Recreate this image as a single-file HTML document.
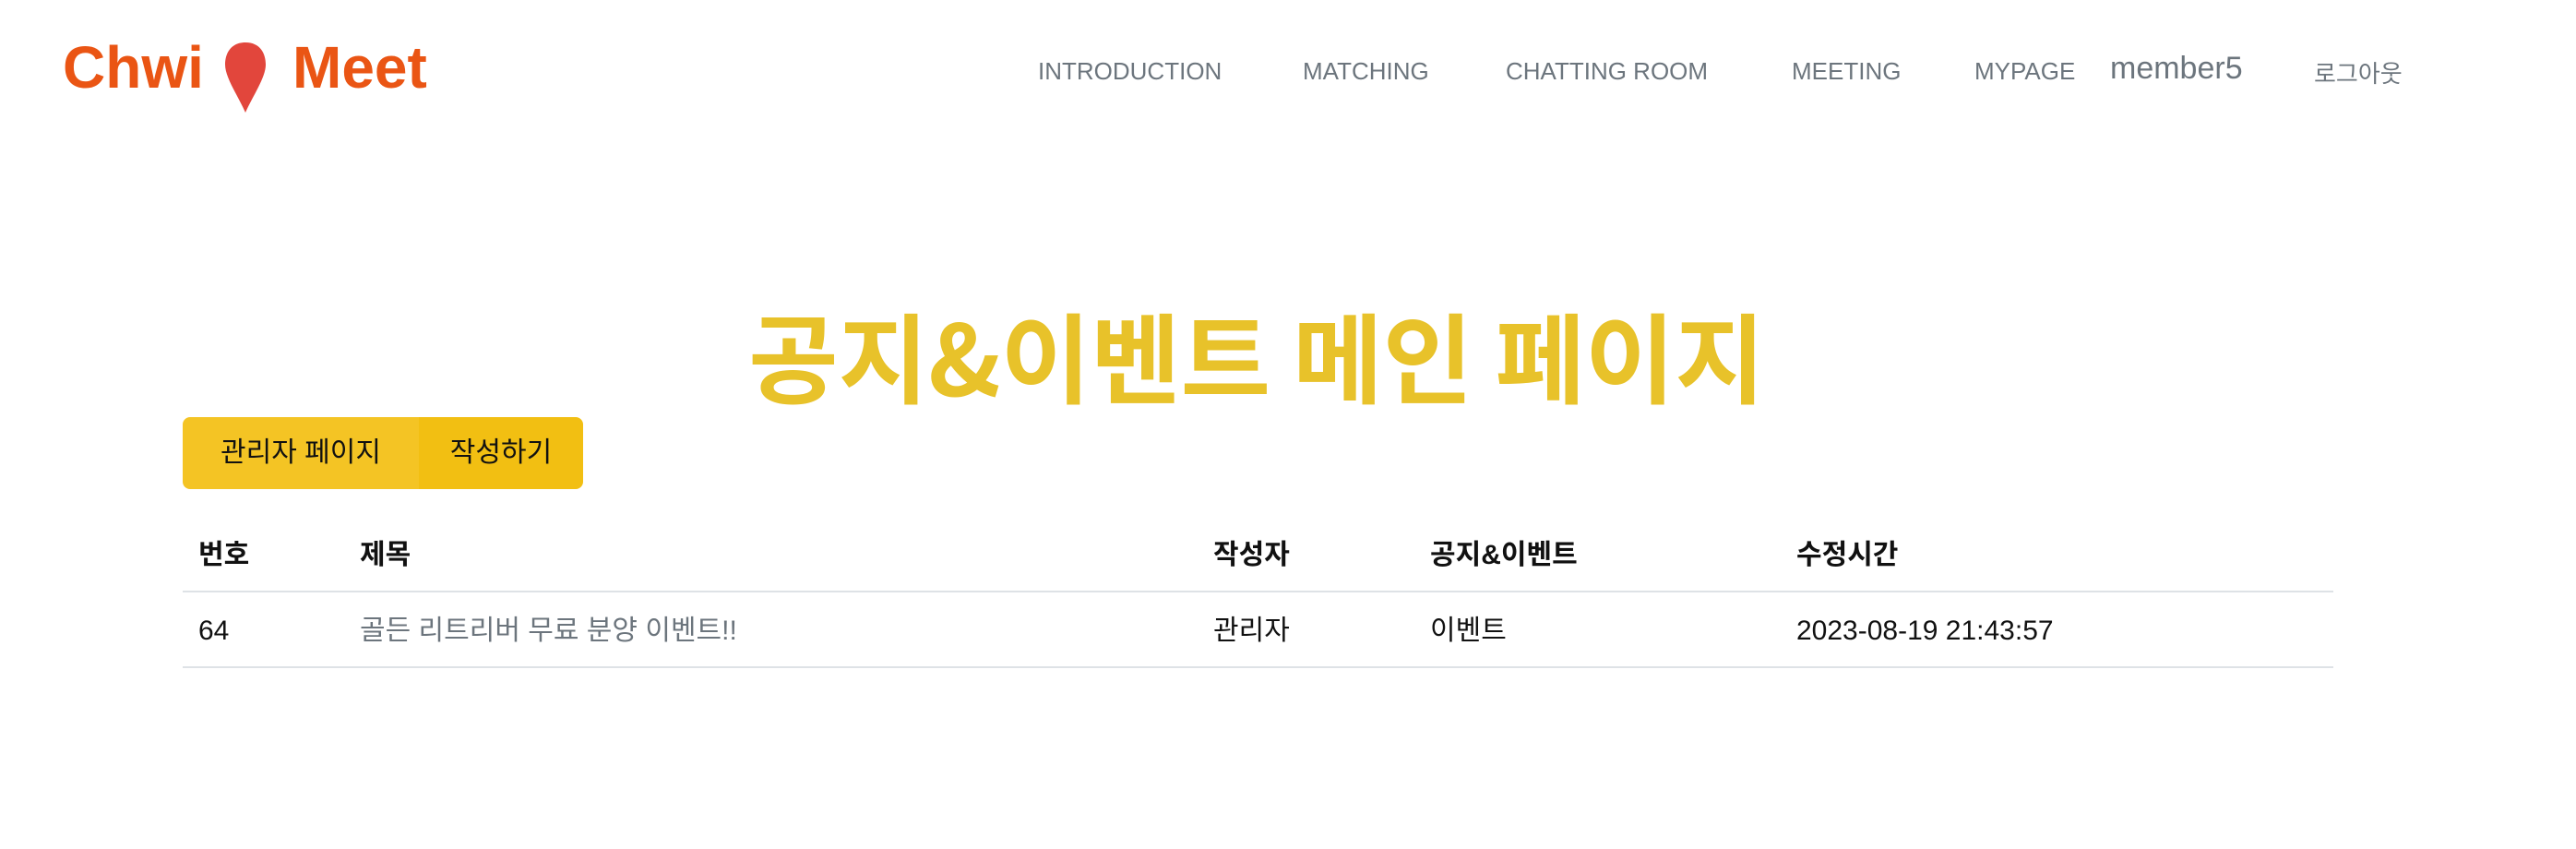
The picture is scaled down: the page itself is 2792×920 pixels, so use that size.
<!DOCTYPE html>
<html><head><meta charset="utf-8"><style>
body{margin:0;width:2792px;height:920px;background:#fff;font-family:"Liberation Sans","Noto Sans CJK KR",sans-serif;position:relative;overflow:hidden}
.a{position:absolute;white-space:nowrap}
.logo{font-weight:bold;font-size:64px;color:#ea5514;top:36px}
.nav{font-size:26px;color:#6c757d;top:62px}
.title{font-family:"Noto Sans CJK KR",sans-serif;font-weight:bold;font-size:106px;line-height:130px;color:#e8c22a;top:318px;left:0;width:2724px;text-align:center}
.btn{top:452px;height:78px;line-height:78px;font-size:30px;color:#111;text-align:center}
.th{font-size:30px;font-weight:bold;color:#111;top:584px;line-height:36px}
.td{font-size:30px;color:#111;top:666px;line-height:36px}
.line{position:absolute;left:198px;width:2331px;height:2px;background:#dee2e6}
</style></head><body>
<div class="a logo" style="left:68px">Chwi</div>
<svg class="a" style="left:236px;top:44px" width="60" height="80" viewBox="0 0 60 80"><path d="M30 2C14 2 8 14 8 26 8 40 22 60 30 78 38 60 52 40 52 26 52 14 46 2 30 2Z" fill="#e2463c"/></svg>
<div class="a logo" style="left:317px">Meet</div>
<div class="a nav" style="left:1125px">INTRODUCTION</div>
<div class="a nav" style="left:1412px">MATCHING</div>
<div class="a nav" style="left:1632px">CHATTING ROOM</div>
<div class="a nav" style="left:1942px">MEETING</div>
<div class="a nav" style="left:2140px">MYPAGE</div>
<div class="a nav" style="left:2287px;top:55px;font-size:34px">member5</div>
<div class="a nav" style="left:2508px;top:60px">로그아웃</div>
<div class="a title">공지&amp;이벤트 메인 페이지</div>
<div class="a btn" style="left:198px;width:256px;background:#f4c424;border-radius:8px 0 0 8px">관리자 페이지</div>
<div class="a btn" style="left:454px;width:178px;background:#f2bf12;border-radius:0 8px 8px 0">작성하기</div>
<div class="a th" style="left:215px">번호</div>
<div class="a th" style="left:390px">제목</div>
<div class="a th" style="left:1315px">작성자</div>
<div class="a th" style="left:1550px">공지&amp;이벤트</div>
<div class="a th" style="left:1947px">수정시간</div>
<div class="line" style="top:640px"></div>
<div class="a td" style="left:215px">64</div>
<div class="a td" style="left:390px;color:#6c757d">골든 리트리버 무료 분양 이벤트!!</div>
<div class="a td" style="left:1315px">관리자</div>
<div class="a td" style="left:1550px">이벤트</div>
<div class="a td" style="left:1947px">2023-08-19 21:43:57</div>
<div class="line" style="top:722px"></div>
</body></html>
